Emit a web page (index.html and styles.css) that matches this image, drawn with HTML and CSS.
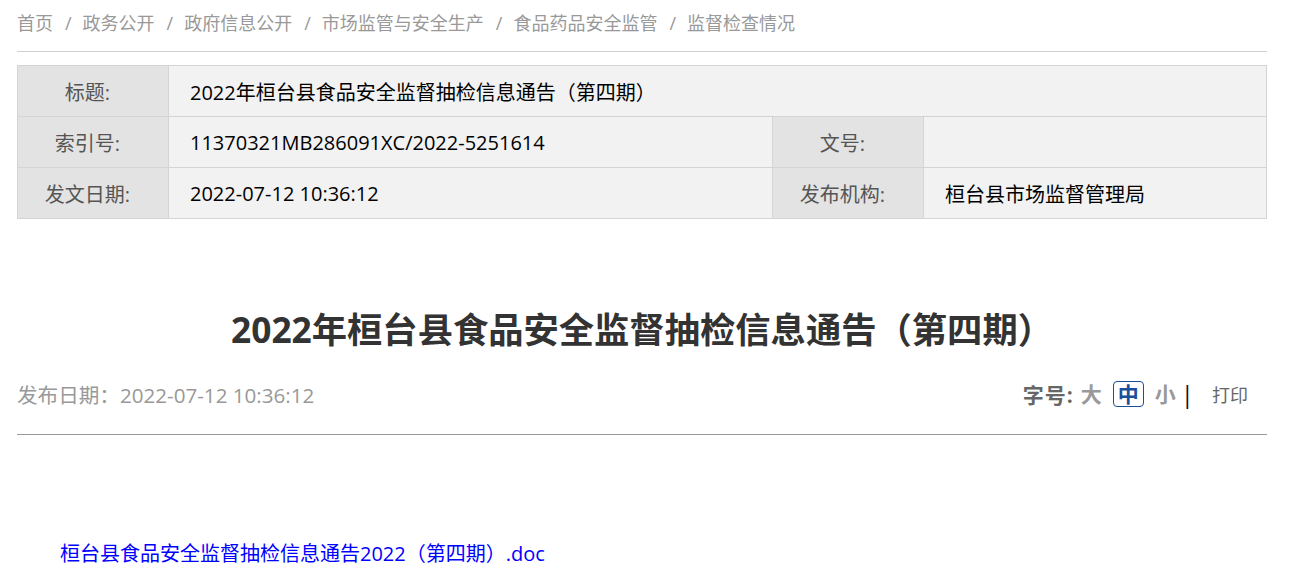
FILE: index.html
```html
<!DOCTYPE html>
<html>
  <head>
    <meta charset="utf-8">
    <link rel="stylesheet" href="styles.css">
  </head>
  <body>
    <div class="page">
      <div class="crumbs">
        <a href="#">首页</a><span class="sep">/</span>
        <a href="#">政务公开</a><span class="sep">/</span>
        <a href="#">政府信息公开</a><span class="sep">/</span>
        <a href="#">市场监管与安全生产</a><span class="sep">/</span>
        <a href="#">食品药品安全监管</a><span class="sep">/</span>
        <a href="#">监督检查情况</a>
      </div>

      <table class="info">
        <tr>
          <td class="label">标题:</td>
          <td class="value" colspan="3">2022年桓台县食品安全监督抽检信息通告（第四期）</td>
        </tr>
        <tr>
          <td class="label">索引号:</td>
          <td class="value">11370321MB286091XC/2022-5251614</td>
          <td class="label">文号:</td>
          <td class="value"></td>
        </tr>
        <tr>
          <td class="label">发文日期:</td>
          <td class="value">2022-07-12 10:36:12</td>
          <td class="label">发布机构:</td>
          <td class="value">桓台县市场监督管理局</td>
        </tr>
      </table>

      <h1 class="title">2022年桓台县食品安全监督抽检信息通告（第四期）</h1>

      <div class="meta">
        <span class="date">发布日期：2022-07-12 10:36:12</span>
        <div class="tools">
          <span class="size-label">字号:</span>
          <a href="#" class="size">大</a>
          <a href="#" class="size active">中</a>
          <a href="#" class="size">小</a>
          <span class="bar">|</span>
          <a href="#" class="print">打印</a>
        </div>
      </div>

      <div class="content">
        <a href="#" class="file">桓台县食品安全监督抽检信息通告2022（第四期）.doc</a>
      </div>
    </div>
  </body>
</html>
```

FILE: styles.css
```css
body {
  margin: 0;
  font-family: "Open Sans", "Noto Sans CJK SC", sans-serif;
  color: #333;
  background: #fff;
}
a {
  text-decoration: none;
}
.page {
  width: 1250px;
  margin-left: 17px;
}
.crumbs {
  display: flex;
  height: 51px;
  line-height: 46px;
  border-bottom: 1px solid #cfcfcf;
  font-size: 18px;
  color: #999;
}
.crumbs a {
  color: #999;
}
.crumbs .sep {
  padding: 0 11px 0 12px;
  color: #999;
}
.info {
  width: 100%;
  margin-top: 13px;
  border-collapse: collapse;
  font-size: 20px;
}
.info td {
  height: 50px;
  padding: 0;
  border: 1px solid #d4d4d4;
}
.info .label {
  width: 139px;
  padding-right: 11px;
  background: #e3e3e3;
  color: #555;
  text-align: center;
}
.info .value {
  background: #f2f2f2;
  color: #000;
  padding-left: 21px;
}
.info tr:nth-child(2) .value:nth-child(2),
.info tr:nth-child(3) .value:nth-child(2) {
  width: 582px;
}
.title {
  margin: 84px 0 0;
  font-size: 35.3px;
  line-height: 52px;
  text-align: center;
  color: #333;
}
.meta {
  display: flex;
  justify-content: space-between;
  align-items: center;
  height: 30px;
  margin-top: 24px;
  padding-bottom: 25px;
  border-bottom: 1px solid #999;
}
.date {
  font-size: 20.6px;
  color: #999;
}
.tools {
  display: flex;
  align-items: center;
  padding-right: 19px;
}
.size-label {
  font-size: 21px;
  font-weight: bold;
  color: #666;
  letter-spacing: 1px;
}
.size {
  font-size: 21px;
  font-weight: bold;
  color: #999;
  margin-left: 6px;
  padding: 0 4px;
  line-height: 24px;
  border: 1px solid transparent;
  border-radius: 4px;
}
.size-label + .size {
  margin-left: 2px;
}
.size.active {
  color: #1a4f9c;
  border-color: #1a4f9c;
}
.bar {
  font-size: 24px;
  line-height: 28px;
  color: #111;
}
.print {
  margin-left: 18px;
  font-size: 18px;
  color: #666;
}
.content {
  padding: 103px 0 0 43px;
}
.file {
  font-size: 20px;
  color: #0000ff;
}
```
